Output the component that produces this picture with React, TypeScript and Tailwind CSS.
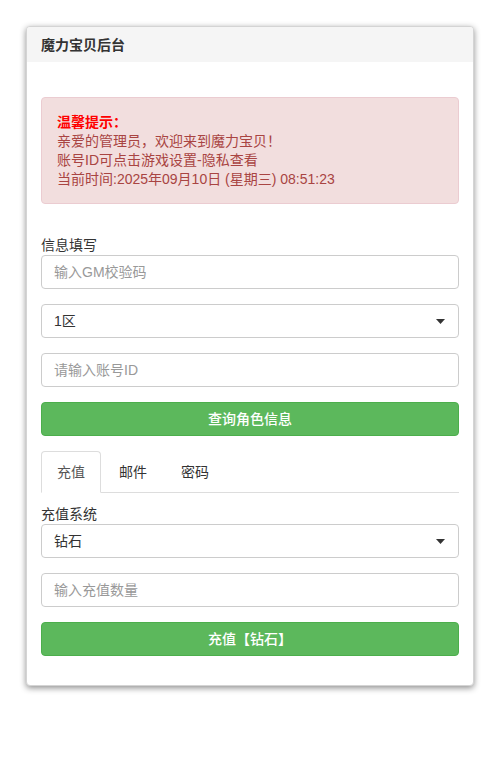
import React from "react";

function Caret() {
  return (
    <svg width="9" height="5" viewBox="0 0 9 5" className="shrink-0">
      <path d="M0 0 L9 0 L4.5 5 Z" fill="#333" />
    </svg>
  );
}

export default function App() {
  return (
    <div className="min-h-[760px] bg-white pt-[26px] pl-[26px] font-['Liberation_Sans','Noto_Sans_CJK_SC',sans-serif] text-[14px] text-[#333]">
      <div className="w-[448px] overflow-hidden rounded-[4px] border border-[#d4d4d4] bg-white shadow-[0_2px_6px_rgba(0,0,0,0.45)]">
        <div className="flex h-[35px] items-center bg-[#f5f5f5] px-[14px] text-[14px] font-bold leading-[20px] text-[#333]">
          魔力宝贝后台
        </div>
        <div className="px-[14px] pt-[35px] pb-[29px]">
          <div className="rounded-[4px] border border-[#ebccd1] bg-[#f2dede] px-[15px] pt-[15px] pb-[14px] text-[14px] leading-[19px] text-[#a94442]">
            <div className="font-bold text-[#ff0000]">温馨提示：</div>
            <div>亲爱的管理员，欢迎来到魔力宝贝！</div>
            <div>账号ID可点击游戏设置-隐私查看</div>
            <div>当前时间:2025年09月10日 (星期三) 08:51:23</div>
          </div>

          <div className="mt-[31px] leading-[20px] text-[#333]">信息填写</div>
          <input
            className="block h-[34px] w-full rounded-[4px] border border-[#ccc] px-[12px] text-[14px] text-[#555] outline-none placeholder:text-[#999]"
            placeholder="输入GM校验码"
          />
          <div className="mt-[15px] flex h-[34px] w-full items-center justify-between rounded-[4px] border border-[#ccc] pl-[12px] pr-[13px] text-[14px] text-[#333]">
            <span>1区</span>
            <Caret />
          </div>
          <input
            className="mt-[15px] block h-[34px] w-full rounded-[4px] border border-[#ccc] px-[12px] text-[14px] text-[#555] outline-none placeholder:text-[#999]"
            placeholder="请输入账号ID"
          />
          <button className="mt-[15px] flex h-[34px] w-full items-center justify-center rounded-[4px] border border-[#4cae4c] bg-[#5cb85c] text-[14px] font-medium text-white">
            查询角色信息
          </button>

          <div className="mt-[15px] flex border-b border-[#ddd]">
            <div className="-mb-px rounded-t-[4px] border border-[#ddd] border-b-white bg-white px-[15px] py-[10px] leading-[20px] text-[#555]">
              充值
            </div>
            <div className="-mb-px ml-[2px] rounded-t-[4px] border border-transparent px-[15px] py-[10px] leading-[20px] text-[#333]">
              邮件
            </div>
            <div className="-mb-px ml-[2px] rounded-t-[4px] border border-transparent px-[15px] py-[10px] leading-[20px] text-[#333]">
              密码
            </div>
          </div>

          <div className="mt-[11px] leading-[20px] text-[#333]">充值系统</div>
          <div className="flex h-[34px] w-full items-center justify-between rounded-[4px] border border-[#ccc] pl-[12px] pr-[13px] text-[14px] text-[#333]">
            <span>钻石</span>
            <Caret />
          </div>
          <input
            className="mt-[15px] block h-[34px] w-full rounded-[4px] border border-[#ccc] px-[12px] text-[14px] text-[#555] outline-none placeholder:text-[#999]"
            placeholder="输入充值数量"
          />
          <button className="mt-[15px] flex h-[34px] w-full items-center justify-center rounded-[4px] border border-[#4cae4c] bg-[#5cb85c] text-[14px] font-medium text-white">
            充值【钻石】
          </button>
        </div>
      </div>
    </div>
  );
}
